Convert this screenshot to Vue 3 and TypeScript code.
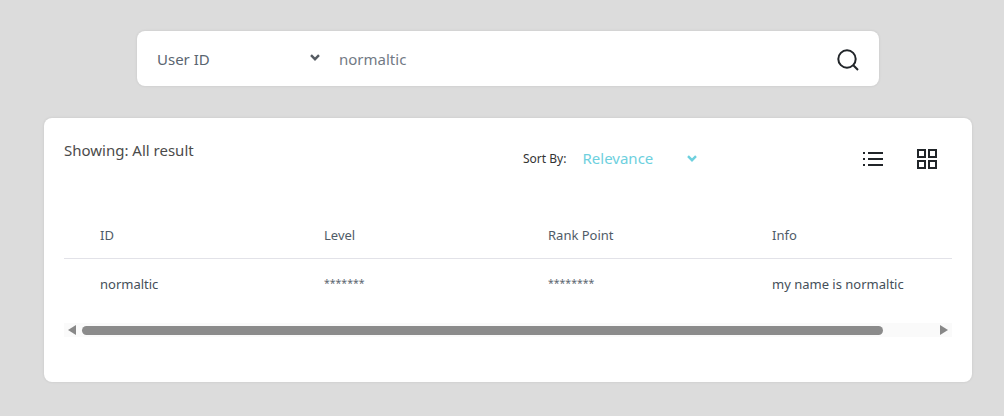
<script setup lang="ts">
const columns: string[] = ['ID', 'Level', 'Rank Point', 'Info']
const row: string[] = ['normaltic', '*******', '********', 'my name is normaltic']
</script>

<template>
  <div class="page">
    <div class="search">
      <div class="type">
        <span>User ID</span>
        <svg class="chev" width="10" height="7" viewBox="0 0 10 7"><path d="M1 1.2 5 5.2 9 1.2" fill="none" stroke="#555b62" stroke-width="2.4" /></svg>
      </div>
      <span class="query">normaltic</span>
      <svg class="glass" width="24" height="24" viewBox="0 0 24 24" fill="none" stroke="#212529" stroke-width="2">
        <circle cx="11" cy="11" r="8.7" />
        <path d="M17.3 17.3 22 22" />
      </svg>
    </div>
    <div class="card">
      <div class="head">
        <div class="showing">Showing: All result</div>
        <div class="sort">
          <span class="sort-label">Sort By:</span>
          <span class="sort-value">Relevance</span>
          <svg class="sort-chev" width="10" height="7" viewBox="0 0 10 7"><path d="M1 1.2 5 5.2 9 1.2" fill="none" stroke="#6dd0de" stroke-width="2.4" /></svg>
        </div>
        <div class="views">
          <svg width="20" height="16" viewBox="0 0 20 16" fill="#212529">
            <rect x="0" y="1" width="2" height="2" /><rect x="0" y="7" width="2" height="2" /><rect x="0" y="13" width="2" height="2" />
            <rect x="5" y="1" width="15" height="2" /><rect x="5" y="7" width="15" height="2" /><rect x="5" y="13" width="15" height="2" />
          </svg>
          <svg width="20" height="20" viewBox="0 0 20 20" fill="none" stroke="#212529" stroke-width="2">
            <rect x="1" y="1" width="7" height="7" /><rect x="12" y="1" width="7" height="7" />
            <rect x="1" y="12" width="7" height="7" /><rect x="12" y="12" width="7" height="7" />
          </svg>
        </div>
      </div>
      <div class="grid header">
        <div v-for="c in columns" :key="c">{{ c }}</div>
      </div>
      <div class="grid body">
        <div v-for="(c, i) in row" :key="i" :class="{ masked: c.startsWith('*') }">{{ c }}</div>
      </div>
      <div class="scrollbar">
        <span class="arrow left"></span>
        <div class="track"><div class="thumb"></div></div>
        <span class="arrow right"></span>
      </div>
    </div>
  </div>
</template>

<style>
html, body { margin: 0; background: #dcdcdc; }
</style>

<style scoped>
.page {
  width: 1004px;
  height: 416px;
  overflow: hidden;
  box-sizing: border-box;
  padding-top: 31px;
  font-family: "Noto Sans", sans-serif;
  font-size: 15px;
  color: #495057;
}
.search {
  box-sizing: border-box;
  width: 742px;
  height: 55px;
  margin-left: 137px;
  padding: 0 19px 0 20px;
  display: flex;
  align-items: center;
  background: #fff;
  border-radius: 8px;
  box-shadow: 0 0 3px rgba(0, 0, 0, 0.1);
}
.type {
  width: 163px;
  display: flex;
  justify-content: space-between;
  align-items: center;
  color: #5a6570;
}
.chev { margin-top: -3px; }
.query {
  margin-left: 19px;
  flex: 1;
  color: #727a85;
}
.glass { margin-top: 3px; }
.card {
  box-sizing: border-box;
  width: 928px;
  height: 264px;
  margin: 32px 0 0 44px;
  padding: 0 20px;
  background: #fff;
  border-radius: 8px;
  box-shadow: 0 0 3px rgba(0, 0, 0, 0.1);
}
.head {
  height: 95px;
  display: flex;
  align-items: flex-start;
}
.showing {
  width: 459px;
  padding-top: 22px;
  line-height: 21px;
  color: #4b4b4b;
}
.sort {
  width: 340px;
  padding-top: 31px;
  display: flex;
  align-items: center;
  line-height: 20px;
}
.sort-label { font-size: 12px; color: #333; width: 59.5px; }
.sort-value { width: 104.5px; margin-top: -2px; color: #6dd0de; }
.sort-chev { margin-top: -2px; }
.views {
  padding-top: 31px;
  display: flex;
  align-items: center;
  gap: 34px;
}
.grid {
  display: grid;
  grid-template-columns: repeat(4, 224px);
  font-size: 13px;
  padding-left: 36px;
}
.header {
  box-sizing: border-box;
  height: 46px;
  padding-bottom: 2px;
  align-items: center;
  border-bottom: 1px solid #e2e2e8;
  color: #4f5b67;
}
.body {
  height: 50px;
  align-items: center;
  color: #454f59;
}
.masked { margin-top: -2px; font-size: 10.5px; color: #5c6670; }
.scrollbar {
  height: 14px;
  margin-top: 14px;
  display: flex;
  align-items: center;
  background: #fafafa;
}
.arrow { width: 0; height: 0; border-top: 5px solid transparent; border-bottom: 5px solid transparent; }
.arrow.left { margin-left: 4px; border-right: 8px solid #888; }
.arrow.right { margin-right: 4px; border-left: 8px solid #888; }
.track { flex: 1; padding-left: 6px; }
.thumb { width: 801px; height: 9px; background: #8b8b8b; border-radius: 5px; }
</style>
